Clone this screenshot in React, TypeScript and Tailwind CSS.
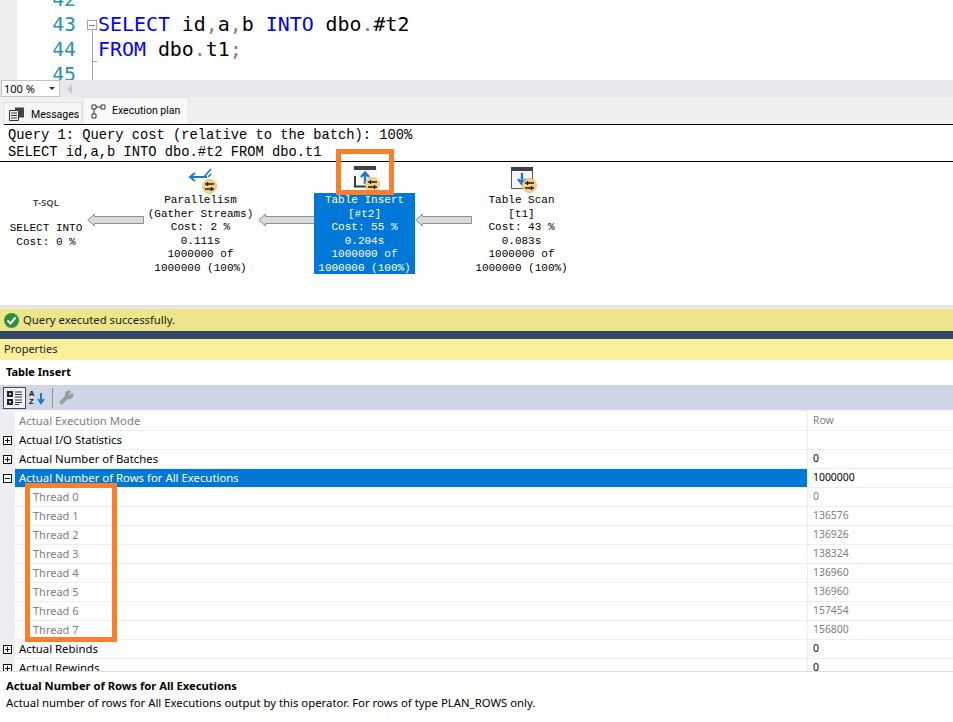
import React from "react";
import { Wrench } from "lucide-react";

const ui = "font-['Noto_Sans',sans-serif]";
const plan = "font-['Liberation_Mono',monospace]";

function SwapBadge({ className }: { className: string }) {
    return (
        <svg className={className} width="15" height="15" viewBox="0 0 15 15">
            <circle cx="7.5" cy="7.5" r="7" fill="#f3d08c" stroke="#e8bf72" />
            <path d="M3 5H12M3 10H12" stroke="#1c1c1c" strokeWidth="1.3" />
            <path d="M5.5 3L5.5 7M9.5 8L9.5 12" stroke="#1c1c1c" strokeWidth="1.3" />
        </svg>
    );
}

function TableIcon({ up }: { up: boolean }) {
    return (
        <svg width="24" height="24" viewBox="0 0 24 24">
            <rect x="0" y="0" width="24" height="24" fill="#f6f6f6" />
            <rect x="1" y="1" width="22" height="4" fill="#424242" />
            {up ? (
                <>
                    <path d="M2 11V21.5H20" fill="none" stroke="#3a3a3a" strokeWidth="2" />
                    <path d="M12 19V8M8 12L12 7.5L16 12" fill="none" stroke="#1f78c8" strokeWidth="2.4" />
                </>
            ) : (
                <>
                    <path d="M1.5 5V22.5H22.5V5" fill="none" stroke="#555" />
                    <path d="M12 7V17M8 13L12 18L16 13" fill="none" stroke="#1f78c8" strokeWidth="2.4" />
                </>
            )}
        </svg>
    );
}

function FlowArrow({ className }: { className: string }) {
    return (
        <svg className={className} width="57" height="14" viewBox="0 0 57 14">
            <path d="M0.7 7L7.5 1V3.5H56.5V10.5H7.5V13Z" fill="#d9d9d9" stroke="#8f8f8f" />
        </svg>
    );
}

function PlanNode({ left, lines, selected }: { left: number; lines: string[]; selected?: boolean }) {
    // nodes sit on the plan canvas, left comes from the node data
    return (
        <div
            className={`absolute top-[31px] w-[101px] h-[81px] text-center text-[11px] leading-[13.5px] pt-[1px] whitespace-nowrap flex flex-col items-center ${plan} ${
                selected ? "bg-[#0078d7] text-white" : "text-black"
            }`}
            style={{ left }}
        >
            {lines.map((l, i) => (
                <div key={i} className="h-[13.5px] shrink-0">
                    {l}
                </div>
            ))}
        </div>
    );
}

const threads = [
    ["Thread 0", "0"],
    ["Thread 1", "136576"],
    ["Thread 2", "136926"],
    ["Thread 3", "138324"],
    ["Thread 4", "136960"],
    ["Thread 5", "136960"],
    ["Thread 6", "157454"],
    ["Thread 7", "156800"],
];

function Expander({ open }: { open: boolean }) {
    return (
        <svg width="9" height="9" viewBox="0 0 9 9" className="ml-[3px]">
            <rect x="0.5" y="0.5" width="8" height="8" fill="white" stroke="#111" />
            <path d={open ? "M2 4.5H7" : "M2 4.5H7M4.5 2V7"} stroke="#111" />
        </svg>
    );
}

function Row({
    name,
    value,
    mode,
    indent,
    selected,
    muted,
}: {
    name: string;
    value: string;
    mode?: "open" | "closed";
    indent?: boolean;
    selected?: boolean;
    muted?: boolean;
}) {
    return (
        <div className="flex h-[19px] shrink-0">
            <div className="w-[15px] bg-[#eeeef2] flex items-center">
                {mode && <Expander open={mode === "open"} />}
            </div>
            <div
                className={`w-[793px] border-b border-r border-[#eeeef2] flex items-center whitespace-nowrap ${
                    indent ? "pl-[18px] text-[11px]" : "pl-[4px] text-[11.35px]"
                } ${selected ? "bg-[#0078d7] text-white" : muted ? "text-[#808080]" : "text-black"}`}
            >
                {name}
            </div>
            <div
                className={`flex-1 border-b border-[#eeeef2] pl-[5px] flex items-center text-[10.4px] ${
                    muted ? "text-[#808080]" : "text-black"
                }`}
            >
                {value}
            </div>
        </div>
    );
}

export default function App() {
    return (
        <div className={`relative w-[953px] h-[722px] overflow-hidden bg-white flex flex-col ${ui}`}>
            {/* editor */}
            <div className="h-[80px] flex overflow-hidden shrink-0">
                <div className="w-[17px] bg-[#eeeeee]" />
                <div className="w-[60px] -mt-[13px] pr-[1px] text-right text-[#2b91af] text-[19.8px] leading-[25px] font-['DejaVu_Sans_Mono',monospace]">
                    <div>42</div>
                    <div>43</div>
                    <div>44</div>
                    <div>45</div>
                </div>
                <div className="relative w-[22px]">
                    <div className="absolute left-[15px] top-[20px] w-[1px] h-[60px] bg-[#a5a5a5]" />
                    <div className="absolute left-[10px] top-[20px] w-[10px] h-[10px] bg-white border border-[#a5a5a5] flex items-center justify-center">
                        <div className="w-[6px] h-[1px] bg-[#777]" />
                    </div>
                    <div className="absolute left-[15px] top-[61px] w-[5px] h-[1px] bg-[#a5a5a5]" />
                </div>
                <div className="-mt-[13px] -ml-[1px] text-[19.9px] leading-[25px] whitespace-pre font-['DejaVu_Sans_Mono',monospace] text-black">
                    <div>&nbsp;</div>
                    <div>
                        <span className="text-[#0000ff]">SELECT</span> id<span className="text-[#808080]">,</span>a
                        <span className="text-[#808080]">,</span>b <span className="text-[#0000ff]">INTO</span> dbo
                        <span className="text-[#808080]">.</span>#t2
                    </div>
                    <div>
                        <span className="text-[#0000ff]">FROM</span> dbo<span className="text-[#808080]">.</span>t1
                        <span className="text-[#808080]">;</span>
                    </div>
                </div>
            </div>

            {/* zoom + scrollbar */}
            <div className="h-[17px] bg-[#e8e8ec] flex items-center shrink-0">
                <div className="ml-[1px] w-[59px] h-[17px] bg-white border border-[#c4c4c4] text-[11px] leading-[15px] pl-[2px] text-black flex items-center justify-between pr-[4px]">
                    <span>100 %</span>
                    <span className="w-0 h-0 border-x-[3px] border-x-transparent border-t-[3px] border-t-[#333]" />
                </div>
                <span className="ml-[7px] w-0 h-0 border-y-[5px] border-y-transparent border-r-[5px] border-r-[#c8c8c8]" />
            </div>

            {/* result tabs */}
            <div className="h-[27px] bg-[#f0f0f0] flex items-end pl-[3px] text-[10.5px] text-black whitespace-nowrap font-['Roboto',sans-serif] shrink-0">
                <div className="w-[79px] h-[22px] bg-[#f5f5f5] border-t border-x border-[#e0e0e0] flex items-center pl-[5px] gap-[6px]">
                    <svg width="16" height="14" viewBox="0 0 16 14">
                        <path d="M0.5 3.5H9.5V13.5H0.5ZM2 6H8M2 8.5H8M2 11H8" fill="none" stroke="#333" />
                        <path d="M6 0.5H15V10.5H10V3H6Z" fill="#444" />
                    </svg>
                    <span className="pt-[2px]">Messages</span>
                </div>
                <div className="ml-[1px] w-[106px] h-[27px] bg-[#f9f9f9] border-t border-x border-[#e6e6e6] flex items-center pl-[7px] gap-[6px]">
                    <svg width="15" height="15" viewBox="0 0 15 15">
                        <path d="M1 1H5V5H1ZM10 1H14V5H10ZM1 10H5V14H1ZM5 3H10M3 5V10" fill="none" stroke="#333" />
                    </svg>
                    <span className="pb-[1px]">Execution plan</span>
                </div>
            </div>

            {/* plan header */}
            <div className={`ml-[4px] h-[37px] border-t border-black text-[13.75px] leading-[17px] pl-[4px] pt-[2px] text-black shrink-0 ${plan}`}>
                <div>Query 1: Query cost (relative to the batch): 100%</div>
                <div>SELECT id,a,b INTO dbo.#t2 FROM dbo.t1</div>
            </div>

            {/* plan canvas */}
            <div className="relative h-[144px] border-t border-black shrink-0">
                <div className={`absolute left-0 top-[34px] w-[92px] text-center text-[9.5px] text-[#444] font-semibold ${ui}`}>T-SQL</div>
                <div className={`absolute left-0 top-[59px] w-[92px] text-center text-[11px] leading-[14px] text-black ${plan}`}>
                    <div>SELECT INTO</div>
                    <div>Cost: 0 %</div>
                </div>
                <FlowArrow className="absolute left-[87px] top-[51px]" />

                <svg className="absolute left-[188px] top-[5px]" width="24" height="17" viewBox="0 0 24 17">
                    <path d="M2 10H19M7 6L2 10L7 14" fill="none" stroke="#1f78c8" strokeWidth="2" />
                    <path d="M16 10L23 2M20 10L23 7" fill="none" stroke="#1f78c8" strokeWidth="1.6" />
                </svg>
                <SwapBadge className="absolute left-[202px] top-[17px]" />
                <PlanNode left={150} lines={["Parallelism", "(Gather Streams)", "Cost: 2 %", "0.111s", "1000000 of", "1000000 (100%)"]} />
                <FlowArrow className="absolute left-[258px] top-[51px]" />

                <div className="absolute left-[353px] top-[3px]">
                    <TableIcon up={true} />
                </div>
                <SwapBadge className="absolute left-[365px] top-[15px]" />
                <PlanNode left={314} selected lines={["Table Insert", "[#t2]", "Cost: 55 %", "0.204s", "1000000 of", "1000000 (100%)"]} />
                <FlowArrow className="absolute left-[415px] top-[51px]" />

                <div className="absolute left-[510px] top-[4px]">
                    <TableIcon up={false} />
                </div>
                <SwapBadge className="absolute left-[522px] top-[16px]" />
                <PlanNode left={471} lines={["Table Scan", "[t1]", "Cost: 43 %", "0.083s", "1000000 of", "1000000 (100%)"]} />
            </div>

            <div className="h-[4px] bg-[#e6e6e6] shrink-0" />

            {/* status */}
            <div className="h-[22px] bg-[#ede58a] flex items-center pl-[4px] gap-[4px] text-[11.3px] text-[#222] shrink-0">
                <svg width="15" height="15" viewBox="0 0 15 15">
                    <circle cx="7.5" cy="7.5" r="7.5" fill="#2f8f3a" />
                    <path d="M3.5 7.5L6.5 10.5L11.5 4.5" fill="none" stroke="white" strokeWidth="2" />
                </svg>
                <span>Query executed successfully.</span>
            </div>
            <div className="h-[8px] bg-[#34496b] shrink-0" />

            {/* properties */}
            <div className="h-[21px] bg-[#fdf09c] flex items-center pl-[4px] text-[11px] text-[#222] shrink-0">Properties</div>
            <div className="h-[25px] flex items-center pl-[6px] text-[11px] font-bold text-black shrink-0">Table Insert</div>
            <div className="h-[25px] bg-[#cfd6e5] flex items-center pl-[3px] shrink-0">
                <div className="w-[23px] h-[22px] bg-[#f0f2f7] border border-[#3c4a66] flex items-center justify-center">
                    <svg width="16" height="14" viewBox="0 0 16 14">
                        <path d="M0 0H6V6H0ZM0 8H6V14H0Z" fill="#222" />
                        <path d="M2 3H4M3 2V4M2 11H4M3 10V12" stroke="white" />
                        <path d="M8 1H15M8 3.5H15M8 6H15M8 9H15M8 11.5H15M8 13.5H12" stroke="#333" />
                    </svg>
                </div>
                <div className="ml-[3px] w-[16px] flex items-center">
                    <div className="w-[8px] flex flex-col text-[7.5px] leading-[8px] font-bold text-[#111] font-['Liberation_Sans',sans-serif]">
                        <span>A</span>
                        <span>Z</span>
                    </div>
                    <svg width="8" height="14" viewBox="0 0 8 14">
                        <path d="M4 2V11M1 8L4 12L7 8" fill="none" stroke="#1f78c8" strokeWidth="2" />
                    </svg>
                </div>
                <div className="ml-[7px] w-[1px] h-[20px] bg-[#8a94a8]" />
                <Wrench className="ml-[6px] text-[#9a9a9a] fill-[#9a9a9a]" size={15} />
            </div>
            <div className="h-[2px] bg-[#f5f5f7] shrink-0" />

            {/* property grid */}
            <div className="h-[259px] overflow-hidden flex flex-col shrink-0">
                <Row name="Actual Execution Mode" value="Row" muted />
                <Row name="Actual I/O Statistics" value="" mode="closed" />
                <Row name="Actual Number of Batches" value="0" mode="closed" />
                <Row name="Actual Number of Rows for All Executions" value="1000000" mode="open" selected />
                {threads.map(([n, v]) => (
                    <Row key={n} name={n} value={v} indent muted />
                ))}
                <Row name="Actual Rebinds" value="0" mode="closed" />
                <Row name="Actual Rewinds" value="0" mode="closed" />
            </div>

            {/* description */}
            <div className="flex-1 border-t border-[#e0e0e0] pl-[6px] pt-[5px] text-[11.35px] leading-[17px] text-black">
                <div className="font-bold text-[11.2px]">Actual Number of Rows for All Executions</div>
                <div>Actual number of rows for All Executions output by this operator. For rows of type PLAN_ROWS only.</div>
            </div>

            {/* annotation boxes drawn over the screenshot */}
            <div className="absolute left-[336px] top-[149px] w-[58px] h-[46px] border-[5px] border-[#f97f2a]" />
            <div className="absolute left-[25px] top-[483px] w-[92px] h-[159px] border-[5px] border-[#f97f2a]" />
        </div>
    );
}
